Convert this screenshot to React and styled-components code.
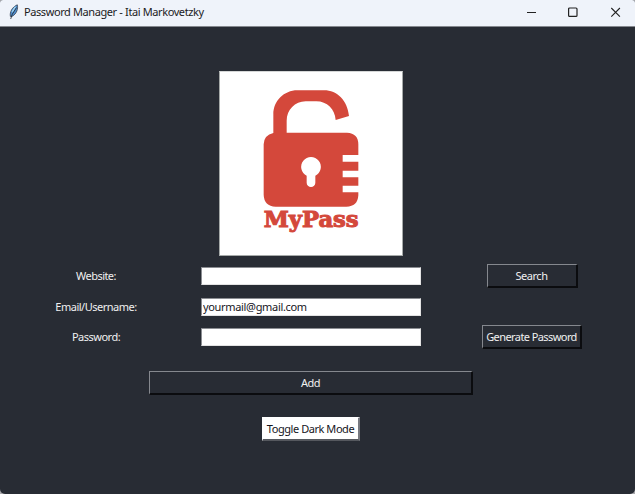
import React from "react";
import styled, { createGlobalStyle } from "styled-components";

const GlobalStyle = createGlobalStyle`
  * { box-sizing: border-box; }
  body { margin: 0; background: #a9a9ad; overflow: hidden; }
`;

const Window = styled.div`
  width: 635px;
  height: 494px;
  display: flex;
  flex-direction: column;
  background: #282c34;
  border-radius: 3px 3px 5px 5px;
  overflow: hidden;
  font-family: "Noto Sans", "Open Sans", sans-serif;
`;

const TitleBar = styled.header`
  flex: none;
  height: 27px;
  display: flex;
  align-items: center;
  padding: 0 14px 2px 7px;
  background: #eff3fa;
  border-bottom: 1px solid #85888e;
  color: #1b1b1d;
`;

const Title = styled.h1`
  flex: 1;
  margin: 0 0 0 3px;
  font-size: 11px;
  font-weight: 400;
  line-height: 16px;
  letter-spacing: -0.42px;
  word-spacing: 0.2px;
  white-space: nowrap;
`;

const WindowControls = styled.div`
  display: flex;
  gap: 32px;
  svg { display: block; overflow: visible; }
`;

const Content = styled.main`
  flex: 1;
  display: flex;
  flex-direction: column;
  align-items: center;
  padding-top: 44px;
`;

const LogoCanvas = styled.div`
  width: 184px;
  height: 185px;
  margin-right: 13px;
  background: #fff;
  border: 1px solid #a6aaa9;
  border-top-color: #d5d7d7;
  svg { display: block; margin: -1px; }
`;

const Form = styled.div`
  align-self: stretch;
  margin-top: 5px;
  display: grid;
  grid-template-columns: 192px 238px 204px;
  grid-template-rows: 30px 31px 30px;
  align-items: center;
  justify-items: center;
`;

const Label = styled.label`
  grid-column: 1;
  font-size: 11px;
  line-height: 16px;
  letter-spacing: ${(p) => p.$spacing};
  color: #f0f0f0;
  white-space: nowrap;
`;

const Entry = styled.input`
  grid-column: 2;
  width: 220px;
  height: 18px;
  padding: 0 1px;
  border: 1px solid #8b8d92;
  border-right-color: #e3e3e3;
  border-bottom-color: #e3e3e3;
  border-radius: 0;
  outline: none;
  background: #fff;
  color: #15151c;
  font-family: inherit;
  font-size: 11px;
  letter-spacing: -0.33px;
`;

const Button = styled.button`
  width: ${(p) => p.$width}px;
  height: 24px;
  padding: 1px 0 0;
  border-style: solid;
  border-width: 1px 2px 2px 1px;
  border-color: ${(p) =>
    p.$light ? "#fff #777980 #55585e #fff" : "#85888e #0b0c0f #0b0c0f #85888e"};
  border-radius: 0;
  background: ${(p) => (p.$light ? "#fff" : "#282c34")};
  color: ${(p) => (p.$light ? "#15151c" : "#f0f0f0")};
  font-family: inherit;
  font-size: 11px;
  line-height: 16px;
  letter-spacing: ${(p) => p.$spacing || "-0.45px"};
  white-space: nowrap;
`;

const Actions = styled.div`
  display: flex;
  flex-direction: column;
  align-items: center;
  gap: 22px;
  margin: 19px 13px 0 0;
`;

const Feather = () => (
  <svg width="14" height="16" viewBox="0 0 14 16">
    <path d="M3.4 12.5C2.6 8 5 3.2 10.3.8 11.3 4.5 9.8 9.8 5.2 12.3Z" fill="#4f8fd0" stroke="#3a4252" strokeWidth=".8" />
    <path d="M8.5 2.6 5.2 8" stroke="#9bd0f0" strokeWidth="1.6" />
    <path d="M9.5 3.5 5.3 10.2 3.7 15" fill="none" stroke="#20242c" strokeWidth=".8" />
  </svg>
);

const Logo = () => (
  <svg width="184" height="185" viewBox="27 34 552 555">
    <path
      fill="#d4483b"
      d="M190 220V164C190 124 222 92 262 92H342C382 92 412 122 417 169L377 181C375 149 351 125 319 125H287C255 125 230 151 230 183V219H411Q445 221 445 254V286H398V306H445V333H398V353H445V378H398V398H445V407Q443 441 409 441H197Q162 439 161 405V254Q162 226 190 220Z"
    />
    <path fill="#fff" d="M290 348A29.5 29.5 0 1 1 316 348V369A13 13 0 0 1 290 369Z" />
    <text
      x="161" y="501" textLength="285" lengthAdjust="spacingAndGlyphs"
      fill="#d4483b" stroke="#d4483b" strokeWidth="3"
      fontFamily="'DejaVu Serif', serif" fontWeight="700" fontSize="64"
    >MyPass</text>
  </svg>
);

export default function App() {
  return (
    <>
      <GlobalStyle />
      <Window>
        <TitleBar>
          <Feather />
          <Title>Password Manager - Itai Markovetzky</Title>
          <WindowControls>
            <svg width="10" height="10" viewBox="0 0 10 10"><path d="M0 5.5H9" stroke="#222" /></svg>
            <svg width="10" height="10" viewBox="0 0 10 10"><rect x="-.4" y="1" width="8.4" height="8.4" rx="1" fill="none" stroke="#222" strokeWidth="1.2" /></svg>
            <svg width="10" height="10" viewBox="0 0 10 10"><path d="M.3 1 8.9 9.6M8.9 1 .3 9.6" stroke="#222" strokeWidth="1.1" /></svg>
          </WindowControls>
        </TitleBar>
        <Content>
          <LogoCanvas><Logo /></LogoCanvas>
          <Form>
            <Label htmlFor="website" $spacing="-0.55px">Website:</Label>
            <Entry id="website" />
            <Button $width={91}>Search</Button>
            <Label htmlFor="email" $spacing="-0.5px">Email/Username:</Label>
            <Entry id="email" defaultValue="yourmail@gmail.com" />
            <Label htmlFor="password" $spacing="-0.5px">Password:</Label>
            <Entry id="password" />
            <Button $width={100} $spacing="-0.58px">Generate Password</Button>
          </Form>
          <Actions>
            <Button $width={324}>Add</Button>
            <Button $width={98} $light>Toggle Dark Mode</Button>
          </Actions>
        </Content>
      </Window>
    </>
  );
}
